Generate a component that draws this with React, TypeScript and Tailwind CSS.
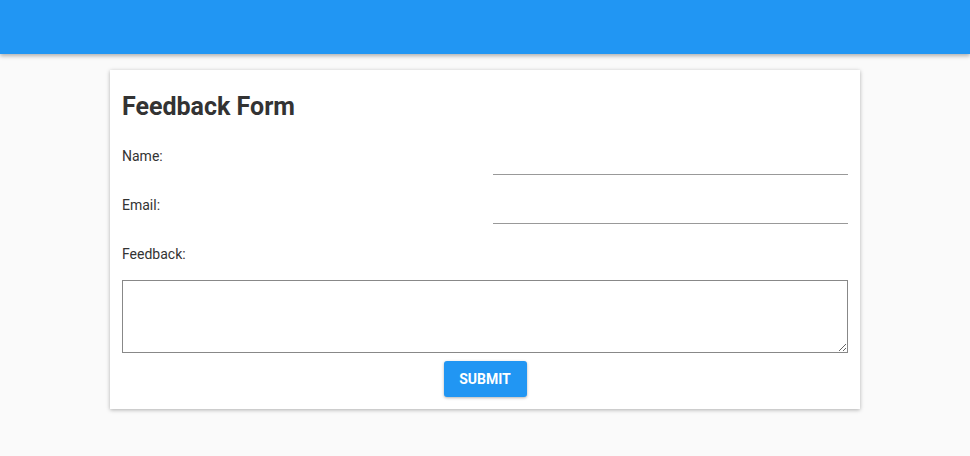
import { useState } from 'react'

export default function App() {
  const [name, setName] = useState('')
  const [email, setEmail] = useState('')
  const [feedback, setFeedback] = useState('')

  return (
    <div className="min-h-screen bg-[#fafafa] font-['Roboto',sans-serif] text-[#333]">
      <header className="h-[54px] bg-[#2196f3] shadow-[0_2px_4px_rgba(0,0,0,0.3)]" />

      <form
        className="mx-auto mt-4 w-[750px] bg-white px-3 pt-3 pb-3 shadow-[0_1px_4px_rgba(0,0,0,0.3)]"
        onSubmit={e => e.preventDefault()}
      >
        <h2 className="mt-[9px] text-[25px] leading-8 font-bold">Feedback Form</h2>

        <div className="mt-[23px] flex h-[49px] items-start justify-between">
          <label className="text-sm leading-5">Name:</label>
          <input
            value={name}
            onChange={e => setName(e.target.value)}
            className="h-[29px] w-[355px] border-b border-[#999] text-sm outline-none"
          />
        </div>

        <div className="flex h-[49px] items-start justify-between">
          <label className="text-sm leading-5">Email:</label>
          <input
            type="email"
            value={email}
            onChange={e => setEmail(e.target.value)}
            className="h-[29px] w-[355px] border-b border-[#999] text-sm outline-none"
          />
        </div>

        <label className="block text-sm leading-5">Feedback:</label>
        <textarea
          value={feedback}
          onChange={e => setFeedback(e.target.value)}
          className="mt-4 block h-[73px] w-full border border-[#888] text-sm outline-none"
        />

        <div className="mt-2 flex justify-center">
          <button
            type="submit"
            className="h-9 w-[83px] rounded-[3px] bg-[#2196f3] text-sm font-bold text-white uppercase shadow-[0_1px_3px_rgba(0,0,0,0.3)]"
          >
            Submit
          </button>
        </div>
      </form>
    </div>
  )
}
